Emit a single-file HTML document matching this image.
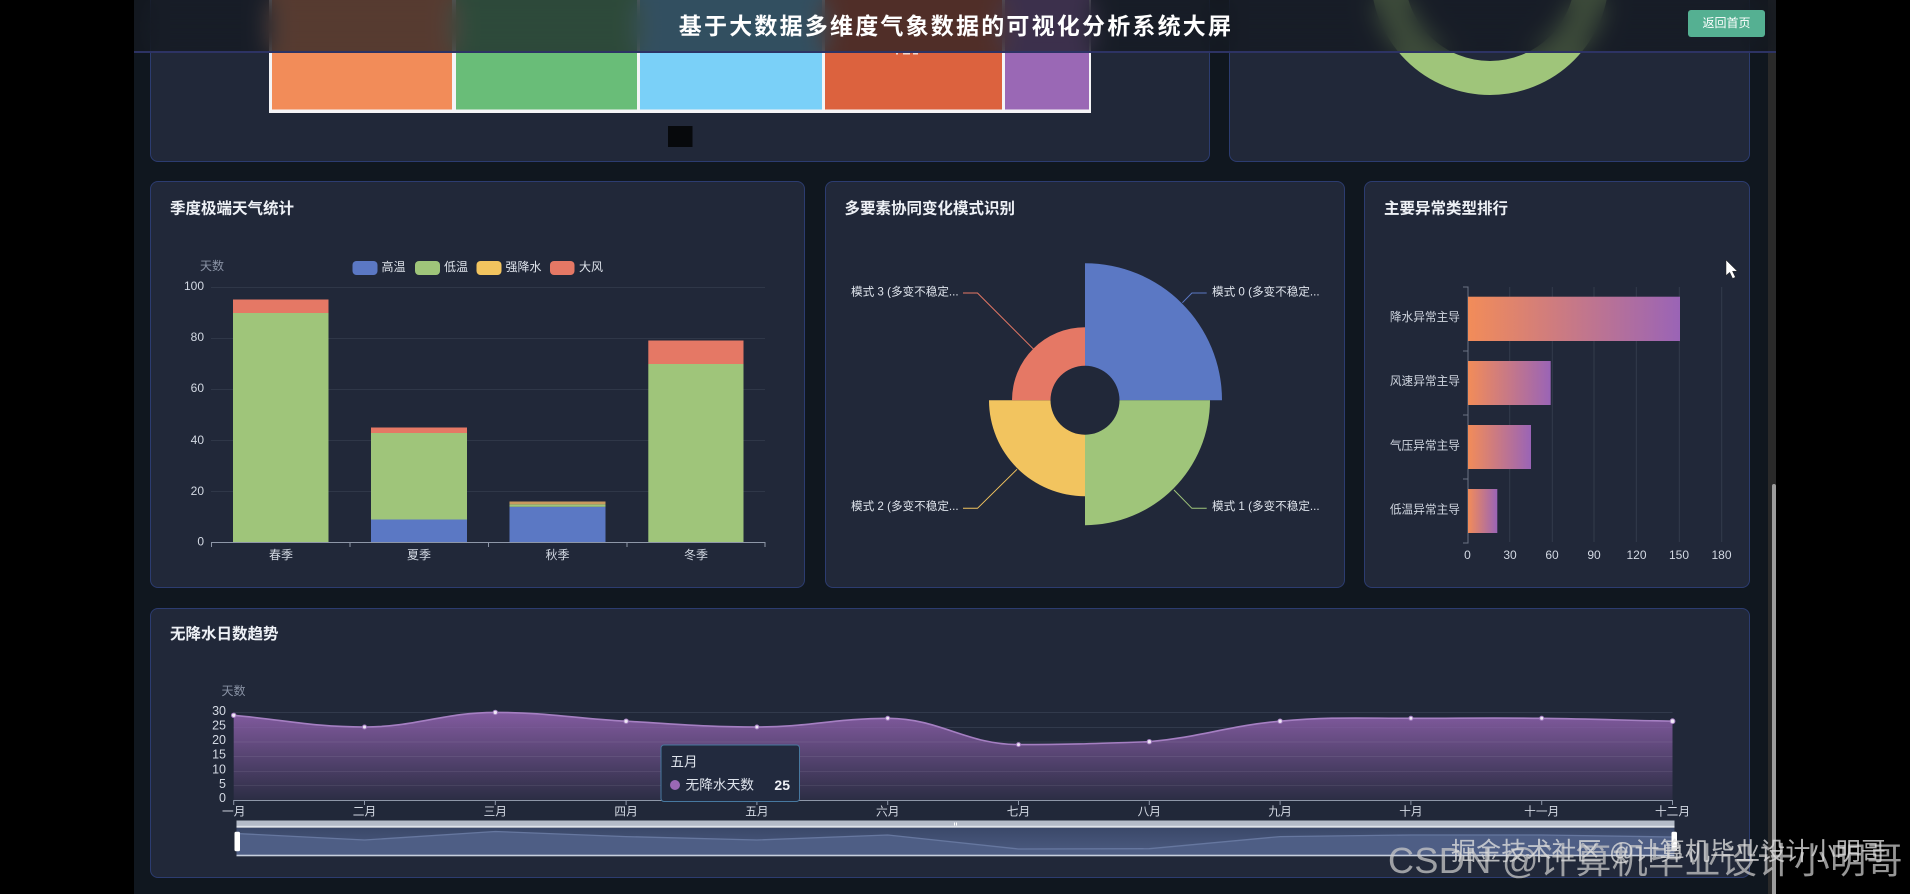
<!DOCTYPE html>
<html lang="zh">
<head>
<meta charset="utf-8">
<title>基于大数据多维度气象数据的可视化分析系统大屏</title>
<style>
html,body{margin:0;padding:0;width:1910px;height:894px;overflow:hidden;background:#000;font-family:"Liberation Sans","Noto Sans CJK SC",sans-serif}
.page{position:absolute;left:134px;top:0;width:1634px;height:894px;background:#10171f}
.track{position:absolute;left:1768px;top:0;width:8px;height:894px;background:#2a2a2a}
.thumb{position:absolute;left:1772px;top:484px;width:4px;height:410px;background:#9c9c9c;border-radius:2px 2px 0 0}
.panel{position:absolute;box-sizing:border-box;background:#212839;border:1px solid #2c3c70;border-radius:8px}
svg.main{position:absolute;left:0;top:0}
svg text{font-family:"Liberation Sans","Noto Sans CJK SC",sans-serif}
.head{position:absolute;left:134px;top:0;width:1642px;height:53px;box-sizing:border-box;background:rgba(20,24,32,.7);-webkit-backdrop-filter:blur(12px);backdrop-filter:blur(12px);border-bottom:2px solid #2d3364}
.title{position:absolute;left:1px;width:1642px;top:9px;line-height:34px;text-align:center;font-size:23px;font-weight:700;letter-spacing:2.2px;color:#fff}
.btn{position:absolute;left:1554px;top:10px;width:77px;height:27px;line-height:27px;text-align:center;background:#55b092;color:#fff;border-radius:3px;font-size:12px}
.wm{position:absolute;white-space:nowrap;line-height:1}
.wm1{left:1388px;top:843px;font-size:36px;letter-spacing:.4px;color:rgba(200,200,200,.75)}
.wm2{left:1451px;top:840px;font-size:25px;letter-spacing:.15px;color:rgba(220,220,220,.8)}
</style>
</head>
<body>
<div class="page"></div>
<div class="track"></div>
<div class="thumb"></div>

<div class="panel" style="left:150px;top:-100px;width:1060px;height:262px"></div>
<div class="panel" style="left:1229px;top:-100px;width:521px;height:262px"></div>
<div class="panel" style="left:150px;top:181px;width:655px;height:407px"></div>
<div class="panel" style="left:825px;top:181px;width:520px;height:407px"></div>
<div class="panel" style="left:1364px;top:181px;width:386px;height:407px"></div>
<div class="panel" style="left:150px;top:608px;width:1600px;height:270px"></div>

<svg class="main" width="1910" height="894" viewBox="0 0 1910 894" xmlns="http://www.w3.org/2000/svg">
<defs>
<linearGradient id="barG" x1="0" y1="0" x2="1" y2="0"><stop offset="0" stop-color="#f28c59"/><stop offset="1" stop-color="#9a64b6"/></linearGradient>
<linearGradient id="areaG" x1="0" y1="0" x2="0" y2="1"><stop offset="0" stop-color="#8a5fa8" stop-opacity=".92"/><stop offset="1" stop-color="#8a5fa8" stop-opacity=".1"/></linearGradient>
<linearGradient id="dzG" x1="0" y1="0" x2="0" y2="1"><stop offset="0" stop-color="#3a4869"/><stop offset="1" stop-color="#4d5c82"/></linearGradient>
</defs>

<!-- top treemap -->
<rect x="269" y="-40" width="822" height="153" fill="#f4f4f6"/>
<rect x="272" y="-40" width="180" height="149.5" fill="#f28c59"/>
<rect x="456" y="-40" width="181" height="149.5" fill="#69bd78"/>
<rect x="640" y="-40" width="182" height="149.5" fill="#7ad0f8"/>
<rect x="825" y="-40" width="177" height="149.5" fill="#dc623e"/>
<rect x="1005" y="-40" width="84" height="149.5" fill="#9a68b5"/>
<rect x="896" y="53" width="2" height="1.5" fill="#f3d8cc"/><rect x="903" y="53" width="7" height="1.5" fill="#f3d8cc"/><rect x="913" y="53" width="5" height="1.5" fill="#f3d8cc"/>
<rect x="668" y="126" width="24.5" height="21" fill="#07090c"/>
<!-- top ring -->
<circle cx="1490" cy="-24" r="102" fill="none" stroke="#9fc57a" stroke-width="34"/>

<!-- panel titles -->
<g font-size="15.5" font-weight="700" fill="#eef1f6">
<text x="170" y="209" dominant-baseline="central">季度极端天气统计</text>
<text x="844.5" y="209" dominant-baseline="central">多要素协同变化模式识别</text>
<text x="1384" y="209" dominant-baseline="central">主要异常类型排行</text>
<text x="170" y="634.5" dominant-baseline="central">无降水日数趋势</text>
</g>

<!-- stacked chart -->
<g stroke="#2f3748" stroke-width="1">
<line x1="211" y1="287.5" x2="765" y2="287.5"/>
<line x1="211" y1="338.5" x2="765" y2="338.5"/>
<line x1="211" y1="389.5" x2="765" y2="389.5"/>
<line x1="211" y1="440.5" x2="765" y2="440.5"/>
<line x1="211" y1="491.5" x2="765" y2="491.5"/>
</g>
<g>
<rect x="233" y="313" width="95.5" height="229.5" fill="#9fc57a"/>
<rect x="233" y="299.5" width="95.5" height="13.5" fill="#e57865"/>
<rect x="371" y="519.5" width="96" height="23" fill="#5b78c4"/>
<rect x="371" y="433" width="96" height="86.5" fill="#9fc57a"/>
<rect x="371" y="427.5" width="96" height="5.5" fill="#e57865"/>
<rect x="509.5" y="506.8" width="96" height="35.7" fill="#5b78c4"/>
<rect x="509.5" y="504.3" width="96" height="2.5" fill="#9fc57a"/>
<rect x="509.5" y="501.5" width="96" height="2.8" fill="#c99a5e"/>
<rect x="648.3" y="364" width="95.2" height="178.5" fill="#9fc57a"/>
<rect x="648.3" y="340.5" width="95.2" height="23.5" fill="#e57865"/>
</g>
<path d="M211.5 547V542.5H765V547M350 542.5V547M488.5 542.5V547M627 542.5V547" fill="none" stroke="#8e97a8" stroke-width="1"/>
<g font-size="12" fill="#d3d9e3" text-anchor="end">
<text x="204" y="286" dominant-baseline="central">100</text>
<text x="204" y="337" dominant-baseline="central">80</text>
<text x="204" y="388" dominant-baseline="central">60</text>
<text x="204" y="440" dominant-baseline="central">40</text>
<text x="204" y="491" dominant-baseline="central">20</text>
<text x="204" y="541.5" dominant-baseline="central">0</text>
</g>
<g font-size="12" fill="#d3d9e3" text-anchor="middle">
<text x="281" y="555" dominant-baseline="central">春季</text>
<text x="419" y="555" dominant-baseline="central">夏季</text>
<text x="557.5" y="555" dominant-baseline="central">秋季</text>
<text x="696" y="555" dominant-baseline="central">冬季</text>
</g>
<text x="200" y="266" font-size="12" fill="#8a93a5" dominant-baseline="central">天数</text>
<rect x="352.5" y="261" width="25" height="14" rx="4" fill="#5b78c4"/>
<rect x="415" y="261" width="25" height="14" rx="4" fill="#9fc57a"/>
<rect x="476.5" y="261" width="25" height="14" rx="4" fill="#f2c45f"/>
<rect x="550" y="261" width="24.5" height="14" rx="4" fill="#e57865"/>
<g font-size="12" fill="#dfe4ec">
<text x="381.5" y="267" dominant-baseline="central">高温</text>
<text x="444" y="267" dominant-baseline="central">低温</text>
<text x="505.5" y="267" dominant-baseline="central">强降水</text>
<text x="579" y="267" dominant-baseline="central">大风</text>
</g>

<!-- rose chart -->
<g transform="translate(-.5,-.5)">
<path d="M1085.5 263.7A137 137 0 0 1 1222.5 400.7H1120A34.5 34.5 0 0 0 1085.5 366.2Z" fill="#5b78c4"/>
<path d="M1210.5 400.7A125 125 0 0 1 1085.5 525.7V435.2A34.5 34.5 0 0 0 1120 400.7Z" fill="#9fc57a"/>
<path d="M1085.5 496.7A96 96 0 0 1 989.5 400.7H1051A34.5 34.5 0 0 0 1085.5 435.2Z" fill="#f2c45f"/>
<path d="M1012.5 400.7A73 73 0 0 1 1085.5 327.7V366.2A34.5 34.5 0 0 0 1051 400.7Z" fill="#e57865"/>
</g>
<g fill="none" stroke-width="1">
<path d="M1182.4 302.7L1191.9 293H1206.7" stroke="#5b78c4"/>
<path d="M1174 490L1191.9 508.3H1206.7" stroke="#9fc57a"/>
<path d="M1017 469.3L977.5 508.3H963" stroke="#f2c45f"/>
<path d="M1033.7 349.3L977.5 293H963" stroke="#e57865"/>
</g>
<g font-size="11.6" fill="#dfe4ec">
<text x="1212" y="292" dominant-baseline="central">模式 0 (多变不稳定...</text>
<text x="1212" y="506.7" dominant-baseline="central">模式 1 (多变不稳定...</text>
<text x="851" y="506.7" dominant-baseline="central">模式 2 (多变不稳定...</text>
<text x="851" y="292" dominant-baseline="central">模式 3 (多变不稳定...</text>
</g>

<!-- ranking chart -->
<g stroke="#333b4c" stroke-width="1">
<line x1="1509.7" y1="287" x2="1509.7" y2="542"/>
<line x1="1552.3" y1="287" x2="1552.3" y2="542"/>
<line x1="1594" y1="287" x2="1594" y2="542"/>
<line x1="1636.3" y1="287" x2="1636.3" y2="542"/>
<line x1="1679.3" y1="287" x2="1679.3" y2="542"/>
<line x1="1721.7" y1="287" x2="1721.7" y2="542"/>
</g>
<path d="M1463 287H1468V543H1463M1463 351H1468M1463 415H1468M1463 479H1468" fill="none" stroke="#6a7284" stroke-width="1"/>
<rect x="1468" y="296.7" width="212" height="44.3" fill="url(#barG)"/>
<rect x="1468" y="361" width="82.7" height="44" fill="url(#barG)"/>
<rect x="1468" y="425" width="63" height="44" fill="url(#barG)"/>
<rect x="1468" y="489" width="29.3" height="44" fill="url(#barG)"/>
<g font-size="11.7" fill="#cfd5df" text-anchor="end">
<text x="1460" y="317.5" dominant-baseline="central">降水异常主导</text>
<text x="1460" y="381.5" dominant-baseline="central">风速异常主导</text>
<text x="1460" y="446" dominant-baseline="central">气压异常主导</text>
<text x="1460" y="510" dominant-baseline="central">低温异常主导</text>
</g>
<g font-size="12" fill="#d3d9e3" text-anchor="middle">
<text x="1467.5" y="555" dominant-baseline="central">0</text>
<text x="1510" y="555" dominant-baseline="central">30</text>
<text x="1552" y="555" dominant-baseline="central">60</text>
<text x="1594" y="555" dominant-baseline="central">90</text>
<text x="1636.5" y="555" dominant-baseline="central">120</text>
<text x="1679" y="555" dominant-baseline="central">150</text>
<text x="1721.5" y="555" dominant-baseline="central">180</text>
</g>
<path d="M1726 260V275.5L1729.7 272.3L1732.6 278.5L1735.4 277.2L1732.5 271.2H1737.3Z" fill="#fff" stroke="#222" stroke-width=".5"/>

<!-- trend chart -->
<line x1="233.7" y1="712.5" x2="1672.5" y2="712.5" stroke="#323a4c" stroke-width="1"/>
<line x1="233.7" y1="727.5" x2="1672.5" y2="727.5" stroke="#323a4c" stroke-width="1"/>
<path d="M233.7 715.3C285.7 720 312.5 727 364.5 727C416.5 727 443.3 712.4 495.3 712.4C547.3 712.4 574.1 718.3 626.1 721.2C678.1 724.1 704.9 727 756.9 727C808.9 727 835.7 718.3 887.7 718.3C939.7 718.3 966.5 744.6 1018.5 744.6C1070.5 744.6 1097.3 743.5 1149.3 741.7C1201.3 737.1 1228.1 725.8 1280.1 721.2C1332.1 716.6 1358.9 718.3 1410.9 718.3C1462.9 718.3 1489.7 717.7 1541.7 718.3C1593.7 718.9 1620.5 720.2 1672.5 721.2V800H233.7Z" fill="url(#areaG)"/>
<g stroke="#ffffff" stroke-opacity=".07" stroke-width="1">
<line x1="233.7" y1="742" x2="1672.5" y2="742"/>
<line x1="233.7" y1="756.5" x2="1672.5" y2="756.5"/>
<line x1="233.7" y1="771.5" x2="1672.5" y2="771.5"/>
<line x1="233.7" y1="785.5" x2="1672.5" y2="785.5"/>
</g>
<path d="M233.7 715.3C285.7 720 312.5 727 364.5 727C416.5 727 443.3 712.4 495.3 712.4C547.3 712.4 574.1 718.3 626.1 721.2C678.1 724.1 704.9 727 756.9 727C808.9 727 835.7 718.3 887.7 718.3C939.7 718.3 966.5 744.6 1018.5 744.6C1070.5 744.6 1097.3 743.5 1149.3 741.7C1201.3 737.1 1228.1 725.8 1280.1 721.2C1332.1 716.6 1358.9 718.3 1410.9 718.3C1462.9 718.3 1489.7 717.7 1541.7 718.3C1593.7 718.9 1620.5 720.2 1672.5 721.2" fill="none" stroke="#a57fc2" stroke-width="1.6"/>
<g fill="#efe8f5" stroke="#a57fc2" stroke-width="1">
<circle cx="233.7" cy="715.3" r="2.2"/><circle cx="364.5" cy="727" r="2"/><circle cx="495.3" cy="712.4" r="2.2"/><circle cx="626.1" cy="721.2" r="2.2"/><circle cx="756.9" cy="727" r="2"/><circle cx="887.7" cy="718.3" r="2"/><circle cx="1018.5" cy="744.6" r="2"/><circle cx="1149.3" cy="741.7" r="2.2"/><circle cx="1280.1" cy="721.2" r="2.2"/><circle cx="1410.9" cy="718.3" r="2"/><circle cx="1541.7" cy="718.3" r="2"/><circle cx="1672.5" cy="721.2" r="2.4"/>
</g>
<path d="M233.7 805V800.5H1672.5V805M364.5 800.5V805M495.3 800.5V805M626.1 800.5V805M756.9 800.5V805M887.7 800.5V805M1018.5 800.5V805M1149.3 800.5V805M1280.1 800.5V805M1410.9 800.5V805M1541.7 800.5V805" fill="none" stroke="#8e97a8" stroke-width="1"/>
<text x="221.5" y="691" font-size="12" fill="#8a93a5" dominant-baseline="central">天数</text>
<g font-size="12.5" fill="#d3d9e3" text-anchor="end">
<text x="226" y="711" dominant-baseline="central">30</text>
<text x="226" y="725.5" dominant-baseline="central">25</text>
<text x="226" y="740" dominant-baseline="central">20</text>
<text x="226" y="754.7" dominant-baseline="central">15</text>
<text x="226" y="769.5" dominant-baseline="central">10</text>
<text x="226" y="784" dominant-baseline="central">5</text>
<text x="226" y="798" dominant-baseline="central">0</text>
</g>
<g font-size="11.7" fill="#d3d9e3" text-anchor="middle">
<text x="233.7" y="812" dominant-baseline="central">一月</text>
<text x="364.5" y="812" dominant-baseline="central">二月</text>
<text x="495.3" y="812" dominant-baseline="central">三月</text>
<text x="626.1" y="812" dominant-baseline="central">四月</text>
<text x="756.9" y="812" dominant-baseline="central">五月</text>
<text x="887.7" y="812" dominant-baseline="central">六月</text>
<text x="1018.5" y="812" dominant-baseline="central">七月</text>
<text x="1149.3" y="812" dominant-baseline="central">八月</text>
<text x="1280.1" y="812" dominant-baseline="central">九月</text>
<text x="1410.9" y="812" dominant-baseline="central">十月</text>
<text x="1541.7" y="812" dominant-baseline="central">十一月</text>
<text x="1672.5" y="812" dominant-baseline="central">十二月</text>
</g>

<!-- tooltip -->
<rect x="661" y="745" width="138.5" height="56.5" rx="3" fill="#222a3e" stroke="#47789f" stroke-width="1"/>
<text x="670.5" y="762" font-size="13.5" fill="#dfe4ec" dominant-baseline="central">五月</text>
<circle cx="675" cy="785" r="5" fill="#9a68b5"/>
<text x="685.5" y="785" font-size="13.7" fill="#dfe4ec" dominant-baseline="central">无降水天数</text>
<text x="790" y="785" font-size="14" font-weight="700" fill="#eef1f6" text-anchor="end" dominant-baseline="central">25</text>

<!-- data zoom -->
<rect x="236.5" y="820.5" width="1438" height="7" fill="#b4bbc8"/>
<rect x="236.5" y="825.8" width="1438" height="2" fill="#dfe3ea"/>
<rect x="236.5" y="827.8" width="1438" height="27.7" fill="url(#dzG)"/>
<path d="M236.5 833.5L364.5 840L495.3 831.5L626.1 836.6L756.9 840L887.7 835L1018.5 849L1149.3 848.7L1280.1 836.6L1410.9 835L1541.7 835L1672.5 837V855.5H236.5Z" fill="#4e5e85"/>
<path d="M236.5 833.5L364.5 840L495.3 831.5L626.1 836.6L756.9 840L887.7 835L1018.5 849L1149.3 848.7L1280.1 836.6L1410.9 835L1541.7 835L1672.5 837" fill="none" stroke="#66779f" stroke-width="1.3"/>
<rect x="236.5" y="854.7" width="1438" height="1.6" fill="#c6cedd"/>
<rect x="234.5" y="831.7" width="5.5" height="19.5" rx="1.5" fill="#fff"/>
<rect x="1671.5" y="831.7" width="5.5" height="19.5" rx="1.5" fill="#fff"/>
<rect x="954" y="822.5" width="1" height="3" fill="#fff"/><rect x="956" y="822.5" width="1" height="3" fill="#fff"/>
</svg>

<div class="head">
  <div class="title">基于大数据多维度气象数据的可视化分析系统大屏</div>
  <div class="btn">返回首页</div>
</div>

<div class="wm wm1">CSDN @计算机毕业设计小明哥</div>
<div class="wm wm2">掘金技术社区 @计算机毕业设计小明哥</div>
</body>
</html>
